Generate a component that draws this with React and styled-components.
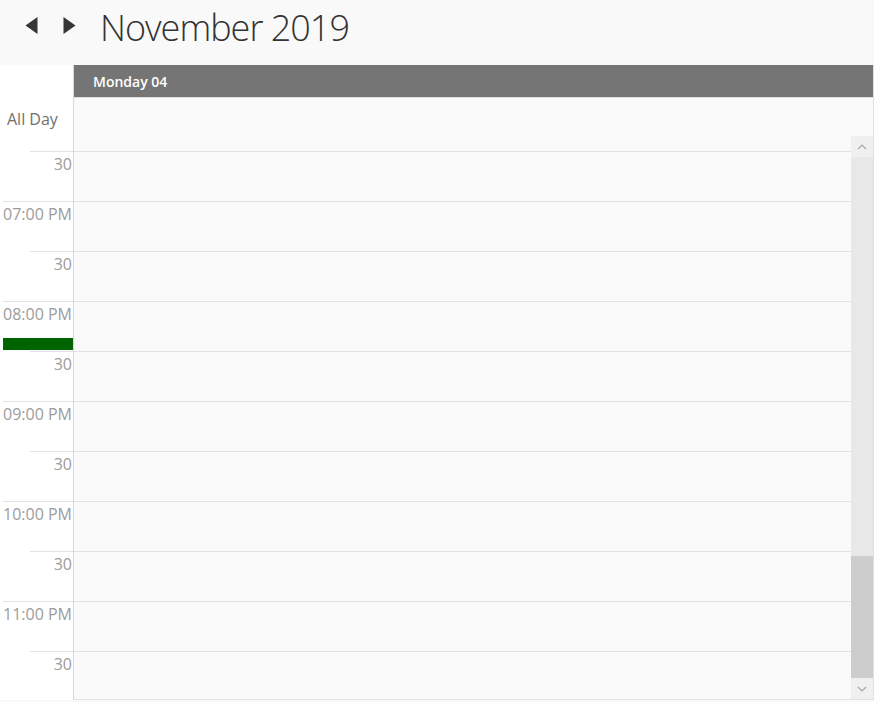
import React from "react";
import styled, { createGlobalStyle } from "styled-components";

const GlobalStyle = createGlobalStyle`
  html, body {
    margin: 0;
    padding: 0;
    background: #f9f9f9;
    font-family: "Open Sans", "Liberation Sans", sans-serif;
    overflow: hidden;
  }
`;

const Page = styled.div`
  width: 874px;
  height: 702px;
  display: flex;
  flex-direction: column;
`;

const Header = styled.div`
  height: 65px;
  display: flex;
  align-items: flex-start;
  padding-left: 25px;
  box-sizing: border-box;
`;

const NavButton = styled.button`
  width: 13px;
  height: 17px;
  padding: 0;
  margin: 17px ${(p) => p.$gap || 0}px 0 0;
  border: none;
  background: transparent;
  display: flex;
  cursor: pointer;
`;

const Title = styled.h1`
  margin: 3px 0 0 0;
  font-size: 36px;
  line-height: 49px;
  font-weight: 300;
  letter-spacing: -1px;
  color: #333;
`;

const Calendar = styled.div`
  display: flex;
  flex-direction: column;
  width: 873px;
  border-right: 1px solid #e0e0e0;
`;

const HeadRow = styled.div`
  display: flex;
  height: 33px;
`;

const Corner = styled.div`
  width: 73px;
  background: #fff;
  border-right: 1px solid #d8d8d8;
`;

const DayHeader = styled.div`
  flex: 1;
  background: #757575;
  color: #fff;
  font-size: 14px;
  font-weight: 600;
  padding: 2px 0 0 19px;
  line-height: 30px;
  border-bottom: 1px solid #e2e2e2;
`;

const AllDayRow = styled.div`
  display: flex;
  height: 38px;
`;

const AllDayLabel = styled.div`
  width: 66px;
  padding: 10px 0 0 7px;
  background: #fff;
  border-right: 1px solid #d8d8d8;
  font-size: 16px;
  color: #707070;
`;

const AllDayCell = styled.div`
  flex: 1;
  background: #fafafa;
`;

const Body = styled.div`
  height: 564px;
  display: flex;
  overflow: hidden;
`;

const TimeColumn = styled.div`
  width: 70px;
  padding-left: 3px;
  background: #fff;
  border-right: 1px solid #d8d8d8;
  overflow: hidden;
`;

const TimeRow = styled.div`
  position: relative;
  height: ${(p) => p.$h}px;
  box-sizing: border-box;
  margin-left: ${(p) => (p.$half ? 27 : 0)}px;
  border-top: ${(p) => (p.$first ? "none" : "1px solid #e2e2e2")};
  text-align: right;
  padding: 1px 1px 0 0;
  font-size: 16px;
  line-height: 22px;
  color: #9c9c9c;
  white-space: nowrap;
`;

const NowBar = styled.div`
  position: absolute;
  left: 0;
  right: 0;
  bottom: 1px;
  height: 12px;
  background: #006400;
`;

const Slots = styled.div`
  flex: 1;
  background: #fafafa;
  border-bottom: 1px solid #e2e2e2;
  overflow: hidden;
`;

const Slot = styled.div`
  height: ${(p) => p.$h}px;
  box-sizing: border-box;
  border-top: ${(p) => (p.$first ? "none" : "1px solid #e2e2e2")};
`;

const ScrollBar = styled.div`
  width: 22px;
  display: flex;
  flex-direction: column;
  background: #e8e8e8;
  border-bottom: 1px solid #e2e2e2;
`;

const ScrollArrow = styled.div`
  height: 21px;
  background: #f0f0f0;
  display: flex;
  align-items: center;
  justify-content: center;
`;

const Track = styled.div`
  flex: 1;
  display: flex;
  flex-direction: column;
  justify-content: flex-end;
`;

const Thumb = styled.div`
  height: 122px;
  background: #cdcdcd;
`;

const rows = [
  { label: "", h: 15, first: true },
  { label: "30", half: true },
  { label: "07:00 PM" },
  { label: "30", half: true },
  { label: "08:00 PM", now: true },
  { label: "30", half: true },
  { label: "09:00 PM" },
  { label: "30", half: true },
  { label: "10:00 PM" },
  { label: "30", half: true },
  { label: "11:00 PM" },
  { label: "30", half: true },
];

const Triangle = ({ dir }) => (
  <svg width="13" height="17" viewBox="0 0 13 17">
    {dir === "left" ? (
      <polygon points="12.5,0 12.5,17 0.5,8.5" fill="#363636" />
    ) : (
      <polygon points="0.5,0 0.5,17 12.5,8.5" fill="#363636" />
    )}
  </svg>
);

const Chevron = ({ up }) => (
  <svg width="10" height="6" viewBox="0 0 10 6">
    <polyline
      points={up ? "1,5 5,1 9,5" : "1,1 5,5 9,1"}
      fill="none"
      stroke="#a6a6a6"
      strokeWidth="1.2"
    />
  </svg>
);

const App = () => {
  return (
    <Page>
      <GlobalStyle />
      <Header>
        <NavButton $gap={25} aria-label="Previous">
          <Triangle dir="left" />
        </NavButton>
        <NavButton $gap={24} aria-label="Next">
          <Triangle dir="right" />
        </NavButton>
        <Title>November 2019</Title>
      </Header>
      <Calendar>
        <HeadRow>
          <Corner />
          <DayHeader>Monday 04</DayHeader>
        </HeadRow>
        <AllDayRow>
          <AllDayLabel>All Day</AllDayLabel>
          <AllDayCell />
        </AllDayRow>
        <Body>
          <TimeColumn>
            {rows.map((r, i) => (
              <TimeRow key={i} $h={r.h || 50} $half={r.half} $first={r.first}>
                {r.label}
                {r.now && <NowBar />}
              </TimeRow>
            ))}
          </TimeColumn>
          <Slots>
            {rows.map((r, i) => (
              <Slot key={i} $h={r.h || 50} $first={r.first} />
            ))}
          </Slots>
          <ScrollBar>
            <ScrollArrow>
              <Chevron up />
            </ScrollArrow>
            <Track>
              <Thumb />
            </Track>
            <ScrollArrow>
              <Chevron />
            </ScrollArrow>
          </ScrollBar>
        </Body>
      </Calendar>
    </Page>
  );
};

export default App;
